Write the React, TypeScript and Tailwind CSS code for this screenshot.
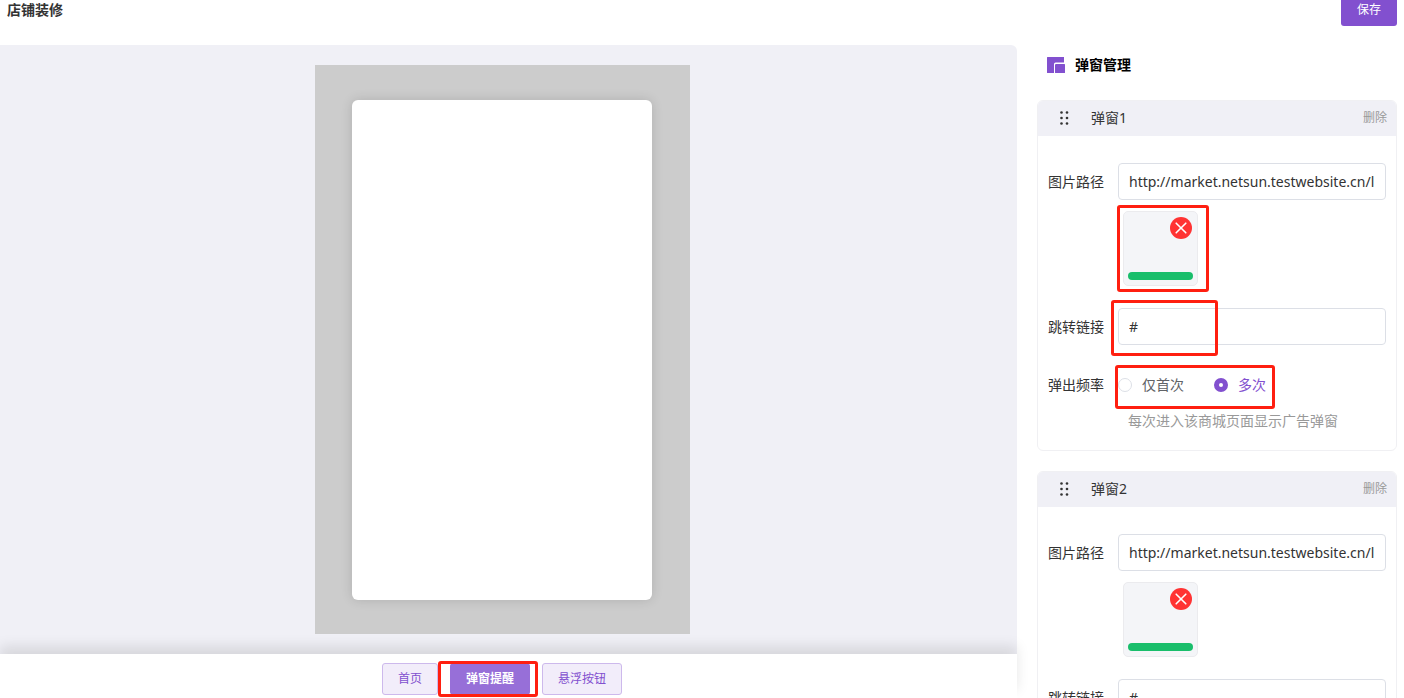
import { useState } from 'react';
import type { ReactNode } from 'react';
import { clsx } from 'clsx';

interface Popup {
  id: number;
  image: string;
  link: string;
  frequency: 'once' | 'always';
  marked: boolean;
}

const initialPopups: Popup[] = [
  { id: 1, image: 'http://market.netsun.testwebsite.cn/l', link: '#', frequency: 'always', marked: true },
  { id: 2, image: 'http://market.netsun.testwebsite.cn/l', link: '#', frequency: 'always', marked: false },
];

const tabs = ['首页', '弹窗提醒', '悬浮按钮'];

// Red highlight frame drawn over other content
function Mark({ className }: { className: string }) {
  return (
    <div className={clsx('pointer-events-none absolute z-10 rounded-[3px] border-3 border-[#ff1f10]', className)} />
  );
}

function LayersIcon() {
  return (
    <svg width="18" height="16" viewBox="0 0 18 16" fill="#8250cf" aria-hidden="true">
      <path d="M.5 0H17v5.5H8.5A1.5 1.5 0 0 0 7 7v9H.5a.5.5 0 0 1-.5-.5V.5A.5.5 0 0 1 .5 0z" />
      <path d="M9 7h8.5a.5.5 0 0 1 .5.5v8a.5.5 0 0 1-.5.5h-9a.5.5 0 0 1-.5-.5V8a1 1 0 0 1 1-1z" />
    </svg>
  );
}

function DragIcon() {
  return (
    <svg width="9" height="14" viewBox="0 0 9 14" fill="#333" aria-hidden="true">
      {[1.5, 7, 12.5].map((y) => (
        <g key={y}>
          <circle cx="1.5" cy={y} r="1.3" />
          <circle cx="7" cy={y} r="1.3" />
        </g>
      ))}
    </svg>
  );
}

function Field({ label, htmlFor, children }: { label: string; htmlFor: string; children: ReactNode }) {
  return (
    <div className="flex items-center gap-[14px]">
      <label htmlFor={htmlFor} className="w-14 shrink-0 whitespace-nowrap">
        {label}
      </label>
      {children}
    </div>
  );
}

function TextInput({ id, value, onChange }: { id: string; value: string; onChange: (v: string) => void }) {
  return (
    <input
      id={id}
      type="text"
      value={value}
      onChange={(e) => onChange(e.target.value)}
      className="h-[37px] w-full min-w-0 rounded border border-[#dcdfe6] bg-white px-[10px] text-sm text-[#333] outline-none focus:border-[#8250cf]"
    />
  );
}

function Radio({ name, label, checked, onChange }: { name: string; label: string; checked: boolean; onChange: () => void }) {
  return (
    <label className={clsx('flex items-center gap-[10px] whitespace-nowrap', checked ? 'text-[#8250cf]' : 'text-[#606266]')}>
      <input
        type="radio"
        name={name}
        checked={checked}
        onChange={onChange}
        className="size-[14px] appearance-none rounded-full border border-[#dcdfe6] bg-white checked:border-5 checked:border-[#8250cf]"
      />
      {label}
    </label>
  );
}

function PopupCard({ popup, onChange, onRemove }: { popup: Popup; onChange: (p: Popup) => void; onRemove: () => void }) {
  const key = `popup-${popup.id}`;

  return (
    <section className="overflow-hidden rounded-md border border-[#f0f0f3] bg-white">
      <header className="-m-px flex h-9 items-center bg-[#f0f0f6] pr-[10px] pl-[23px]">
        <DragIcon />
        <h3 className="ml-[22px] flex-1">弹窗{popup.id}</h3>
        <button type="button" onClick={onRemove} className="text-xs text-[#999]">
          删除
        </button>
      </header>

      <div className="px-[10px] pt-7 pb-[19px]">
        <Field label="图片路径" htmlFor={`${key}-image`}>
          <TextInput id={`${key}-image`} value={popup.image} onChange={(image) => onChange({ ...popup, image })} />
        </Field>

        {/* Uploaded image */}
        <div className="relative mt-[11px] ml-[75px] flex size-[75px] flex-col justify-between rounded-[5px] border border-[#ebebee] bg-[#f4f5f8] px-1 py-[5px]">
          <button
            type="button"
            aria-label="删除图片"
            onClick={() => onChange({ ...popup, image: '' })}
            className="mr-px flex size-[22px] items-center justify-center self-end rounded-full bg-[#ff3333]"
          >
            <svg width="12" height="12" viewBox="0 0 12 12" stroke="#fff" strokeWidth="1.6" strokeLinecap="round">
              <path d="M1.2 1.2l9.6 9.6M10.8 1.2l-9.6 9.6" />
            </svg>
          </button>
          <div className="h-2 rounded-full bg-[#19be6b]" />
          {popup.marked && <Mark className="-top-[7px] -right-3 -bottom-[7px] -left-[7px]" />}
        </div>

        <div className="relative mt-[22px]">
          <Field label="跳转链接" htmlFor={`${key}-link`}>
            <TextInput id={`${key}-link`} value={popup.link} onChange={(link) => onChange({ ...popup, link })} />
          </Field>
          {popup.marked && <Mark className="-top-2 -bottom-[11px] left-[63px] w-[107px]" />}
        </div>

        <div
          role="radiogroup"
          aria-labelledby={`${key}-frequency`}
          className="relative mt-[26px] flex h-7 items-center gap-[14px]"
        >
          <span id={`${key}-frequency`} className="w-14 shrink-0 whitespace-nowrap">
            弹出频率
          </span>
          <div className="flex gap-[30px]">
            <Radio
              name={key}
              label="仅首次"
              checked={popup.frequency === 'once'}
              onChange={() => onChange({ ...popup, frequency: 'once' })}
            />
            <Radio
              name={key}
              label="多次"
              checked={popup.frequency === 'always'}
              onChange={() => onChange({ ...popup, frequency: 'always' })}
            />
          </div>
          {popup.marked && <Mark className="-top-[6px] -bottom-[10px] left-[67px] w-40" />}
        </div>

        <p className="mt-3 ml-20 text-[#999]">每次进入该商城页面显示广告弹窗</p>
      </div>
    </section>
  );
}

export default function App() {
  const [popups, setPopups] = useState(initialPopups);
  const [active, setActive] = useState('弹窗提醒');

  return (
    <div className="flex h-screen flex-col overflow-hidden bg-white font-['Noto_Sans','Noto_Sans_CJK_SC',sans-serif] text-sm text-[#333]">
      <header className="flex h-[45px] shrink-0 items-start justify-between px-[7px]">
        <h1 className="font-bold">店铺装修</h1>
        <button type="button" className="-mt-[6px] h-8 rounded-[3px] bg-[#8250cf] px-4 text-xs text-white">
          保存
        </button>
      </header>

      <div className="flex min-h-0 flex-1 gap-5 pr-[7px]">
        {/* Preview */}
        <main className="flex min-w-0 flex-1 flex-col">
          <div className="flex min-h-0 flex-1 justify-center rounded-tr-md bg-[#f0f0f6] py-5 pr-[13px]">
            <div className="flex w-[375px] items-center justify-center bg-[#ccc]">
              <div className="h-[500px] w-[300px] rounded-md bg-white shadow-[0_0_12px_rgba(0,0,0,0.14)]" />
            </div>
          </div>
          <nav className="flex h-11 shrink-0 justify-center gap-3 bg-white pt-[9px] pr-[13px] shadow-[0_-8px_12px_rgba(0,0,0,0.1)]">
            {tabs.map((tab) => (
              <div key={tab} className="relative h-8">
                <button
                  type="button"
                  onClick={() => setActive(tab)}
                  className={clsx(
                    'h-8 rounded-[3px] border px-[15px] text-xs',
                    tab === active
                      ? 'border-[#976fd8] bg-[#976fd8] font-bold text-white'
                      : 'border-[#cdb9ec] bg-[#f2edfa] text-[#8250cf]'
                  )}
                >
                  {tab}
                </button>
                {tab === '弹窗提醒' && <Mark className="-top-[2px] -right-2 -bottom-[2px] -left-3" />}
              </div>
            ))}
          </nav>
        </main>

        {/* Settings */}
        <aside className="w-[360px] shrink-0 overflow-hidden">
          <div className="flex h-10 items-center gap-[10px] pl-[10px]">
            <LayersIcon />
            <h2 className="font-bold text-black">弹窗管理</h2>
          </div>
          <div className="mt-[15px] flex flex-col gap-5">
            {popups.map((popup) => (
              <PopupCard
                key={popup.id}
                popup={popup}
                onChange={(next) => setPopups(popups.map((p) => (p.id === next.id ? next : p)))}
                onRemove={() => setPopups(popups.filter((p) => p.id !== popup.id))}
              />
            ))}
          </div>
        </aside>
      </div>
    </div>
  );
}
